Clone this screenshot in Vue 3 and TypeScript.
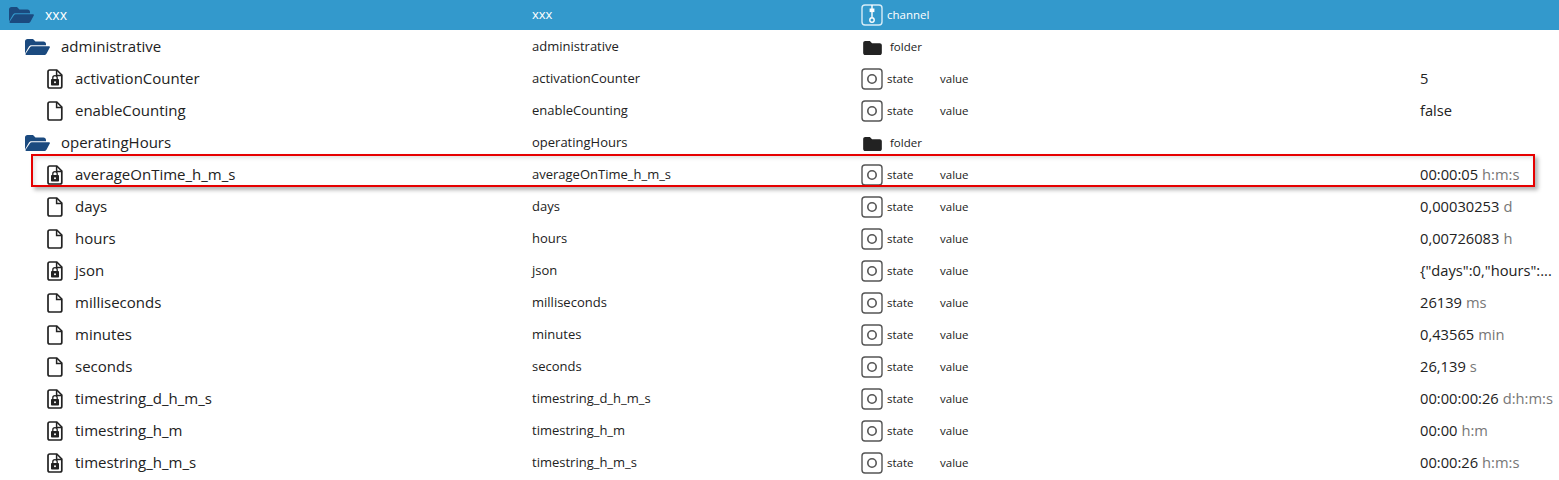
<script setup lang="ts">
interface Row {
  name: string
  kind: 'folder' | 'file' | 'lock'
  type: 'folder' | 'state'
  value?: string
  unit?: string
}

const rows: Row[] = [
  { name: 'administrative', kind: 'folder', type: 'folder' },
  { name: 'activationCounter', kind: 'lock', type: 'state', value: '5' },
  { name: 'enableCounting', kind: 'file', type: 'state', value: 'false' },
  { name: 'operatingHours', kind: 'folder', type: 'folder' },
  { name: 'averageOnTime_h_m_s', kind: 'lock', type: 'state', value: '00:00:05', unit: 'h:m:s' },
  { name: 'days', kind: 'file', type: 'state', value: '0,00030253', unit: 'd' },
  { name: 'hours', kind: 'file', type: 'state', value: '0,00726083', unit: 'h' },
  { name: 'json', kind: 'lock', type: 'state', value: '{"days":0,"hours":...' },
  { name: 'milliseconds', kind: 'file', type: 'state', value: '26139', unit: 'ms' },
  { name: 'minutes', kind: 'file', type: 'state', value: '0,43565', unit: 'min' },
  { name: 'seconds', kind: 'file', type: 'state', value: '26,139', unit: 's' },
  { name: 'timestring_d_h_m_s', kind: 'lock', type: 'state', value: '00:00:00:26', unit: 'd:h:m:s' },
  { name: 'timestring_h_m', kind: 'lock', type: 'state', value: '00:00', unit: 'h:m' },
  { name: 'timestring_h_m_s', kind: 'lock', type: 'state', value: '00:00:26', unit: 'h:m:s' }
]

const folderPath =
  'M0 2.5C0 1 1 0 2.5 0h5.5l2.5 2.5h8c1.4 0 2.5 1 2.5 2.5v1.2H6.5c-1.2 0-2.2.6-2.8 1.7L0 14.5zM5 8.2c.4-.7 1-1 1.8-1H24c.8 0 1.2.6.8 1.3l-3.2 6c-.4.9-1.2 1.5-2.2 1.5H1.3c-.7 0-1-.5-.7-1.2z'
</script>

<template>
  <div class="page">
    <div class="row head">
      <div class="name">
        <svg class="folder-ic" width="25" height="16" viewBox="0 0 25 16"><path :d="folderPath" /></svg>
        <span class="label">xxx</span>
      </div>
      <div class="id">xxx</div>
      <div class="type">
        <svg class="type-ic" width="22" height="22" viewBox="0 0 22 22" fill="none">
          <rect x="1" y="1" width="20" height="20" rx="3" stroke="#d6ecf7" stroke-width="1.4" />
          <path d="M11 1v12" stroke="#fff" stroke-width="1.4" />
          <rect x="8.6" y="4.5" width="4.8" height="3.6" fill="#fff" />
          <circle cx="11" cy="16" r="2.2" stroke="#fff" stroke-width="1.4" />
        </svg>
        <span class="tlabel">channel</span>
      </div>
    </div>

    <div v-for="r in rows" :key="r.name" class="row" :class="{ indent: r.kind === 'folder' }">
      <div class="name">
        <svg v-if="r.kind === 'folder'" class="folder-ic" width="25" height="16" viewBox="0 0 25 16"><path :d="folderPath" /></svg>
        <svg v-else class="file-ic" width="16" height="20" viewBox="0 0 16 20" fill="none">
          <path d="M2.8 1h7l5 5v11.2c0 1-.8 1.8-1.8 1.8H2.8c-1 0-1.8-.8-1.8-1.8V2.8C1 1.8 1.8 1 2.8 1z" stroke="#222" stroke-width="1.7" />
          <path d="M9.6 1v5.4h5.2" stroke="#222" stroke-width="1.5" />
          <template v-if="r.kind === 'lock'">
            <rect x="4" y="10" width="8" height="6.6" rx="0.8" fill="#222" />
            <path d="M5.8 10.2V8.8a2.2 2.2 0 0 1 4.4 0v1.4" stroke="#222" stroke-width="1.3" />
            <circle cx="8" cy="13.2" r="1" fill="#fff" />
          </template>
        </svg>
        <span class="label">{{ r.name }}</span>
      </div>
      <div class="id">{{ r.name }}</div>
      <div class="type" :class="{ isfolder: r.type === 'folder' }">
        <svg v-if="r.type === 'folder'" class="mini" width="19" height="14" viewBox="0 0 20 15">
          <path d="M0 2.2C0 1 1 0 2.2 0h5l2.3 2.4h8.3c1.2 0 2.2 1 2.2 2.2v8.2c0 1.2-1 2.2-2.2 2.2H2.2C1 15 0 14 0 12.8z" fill="#222" />
        </svg>
        <svg v-else class="type-ic" width="22" height="22" viewBox="0 0 22 22" fill="none">
          <rect x="1" y="1" width="20" height="20" rx="3" stroke="#555" stroke-width="1.4" />
          <circle cx="11" cy="11" r="4.2" stroke="#555" stroke-width="1.6" />
        </svg>
        <span class="tlabel">{{ r.type }}</span>
      </div>
      <div class="role">{{ r.type === 'state' ? 'value' : '' }}</div>
      <div class="value">
        <span>{{ r.value }}</span><span v-if="r.unit" class="unit">{{ r.unit }}</span>
      </div>
    </div>

    <div class="mark"></div>
  </div>
</template>

<style>
html,
body {
  margin: 0;
  background: #fff;
}
</style>

<style scoped>
.page {
  position: relative;
  width: 1559px;
  height: 480px;
  overflow: hidden;
  font-family: "Open Sans", "Noto Sans", sans-serif;
  color: #222;
  background: #fff;
}
.row {
  display: grid;
  grid-template-columns: 532px 329px 79px 480px 1fr;
  align-items: center;
  height: 32px;
  white-space: nowrap;
}
.row.head {
  height: 30px;
  margin-bottom: 1px;
  background: #3399cc;
  color: #fff;
}
.name {
  display: flex;
  align-items: center;
  gap: 12px;
  padding-left: 47px;
  font-size: 15px;
}
.label,
.tlabel,
.id,
.role,
.value {
  padding-bottom: 2px;
}
.head .name {
  padding-left: 9px;
  gap: 11px;
  font-size: 14px;
}
.indent .name {
  padding-left: 25px;
  gap: 11px;
}
.folder-ic {
  fill: #1b4a7f;
}
.id {
  font-size: 13px;
}
.type,
.role {
  font-size: 11.5px;
}
.type {
  display: flex;
  align-items: center;
  gap: 4px;
}
.type.isfolder {
  padding-left: 2px;
  gap: 8px;
}
.mini {
  margin-top: 2px;
}
.value {
  font-size: 14.7px;
}
.unit {
  margin-left: 4px;
  color: #777;
}
.mark {
  position: absolute;
  left: 31px;
  top: 154px;
  width: 1500px;
  height: 29px;
  border: 2px solid #e60000;
  box-shadow: 3px 3px 4px rgba(0, 0, 0, 0.3), inset 2px 2px 4px rgba(0, 0, 0, 0.12);
}
</style>
